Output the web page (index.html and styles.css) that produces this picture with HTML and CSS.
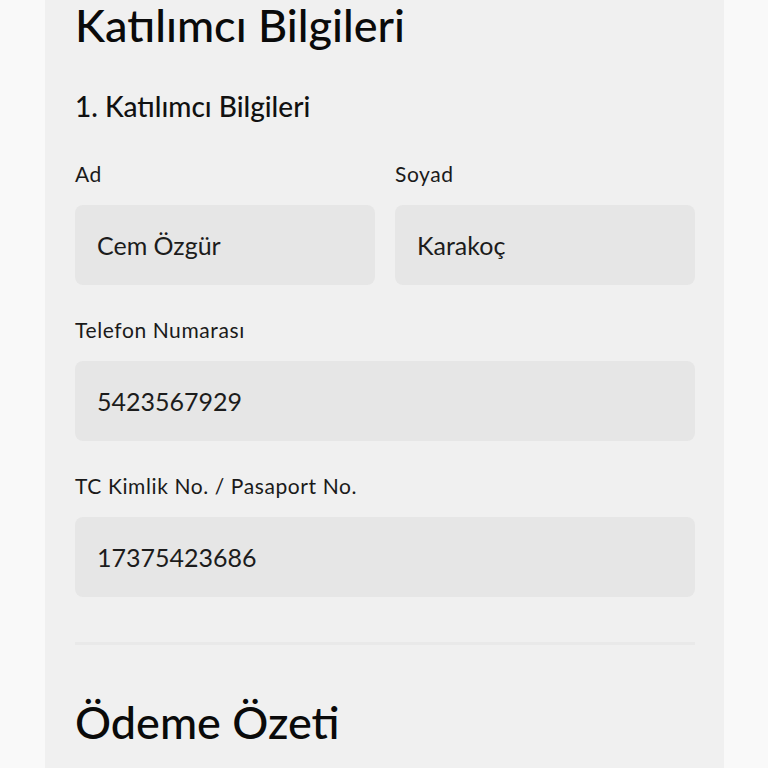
FILE: index.html
```html
<!DOCTYPE html>
<html lang="tr">
<head>
<meta charset="utf-8">
<title>Katılımcı Bilgileri</title>
<link rel="stylesheet" href="styles.css">
</head>
<body>
<main class="panel">
  <h1 class="title">Katılımcı Bilgileri</h1>
  <section class="participant">
    <h2 class="subtitle">1. Katılımcı Bilgileri</h2>
    <div class="row two">
      <label class="field">
        <span class="label">Ad</span>
        <span class="input">Cem Özgür</span>
      </label>
      <label class="field">
        <span class="label">Soyad</span>
        <span class="input">Karakoç</span>
      </label>
    </div>
    <label class="field">
      <span class="label">Telefon Numarası</span>
      <span class="input">5423567929</span>
    </label>
    <label class="field">
      <span class="label">TC Kimlik No. / Pasaport No.</span>
      <span class="input">17375423686</span>
    </label>
  </section>
  <hr class="divider">
  <h1 class="title summary">Ödeme Özeti</h1>
</main>
</body>
</html>
```

FILE: styles.css
```css
html, body {
  margin: 0;
  padding: 0;
  background: #f9f9f9;
  height: 768px;
  overflow: hidden;
}

body {
  font-family: "Lato", "Open Sans", sans-serif;
  color: #111;
}

.panel {
  width: 679px;
  margin-left: 45px;
  background: #f0f0f0;
  box-sizing: border-box;
  padding: 2px 29px 40px 30px;
  min-height: 800px;
}

.title {
  margin: 0;
  font-size: 45px;
  font-weight: 500;
  line-height: 46px;
  color: #0a0a0a;
}

.subtitle {
  margin: 41px 0 0;
  font-size: 28px;
  font-weight: 500;
  line-height: 34px;
  color: #111;
}

.participant {
  display: flex;
  flex-direction: column;
  gap: 33px;
}

.row.two {
  display: grid;
  grid-template-columns: 1fr 1fr;
  gap: 20px;
  margin-top: 6px;
}

.field {
  display: flex;
  flex-direction: column;
  gap: 19px;
}

.label {
  font-size: 21px;
  line-height: 24px;
  letter-spacing: 0.6px;
  color: #1a1a1a;
}

.input {
  display: flex;
  align-items: center;
  height: 80px;
  padding: 0 22px;
  border-radius: 8px;
  background: #e6e6e6;
  font-size: 25px;
  color: #1c1c1c;
}

.divider {
  margin: 45px 0 0;
  border: 0;
  height: 3px;
  background: #e9e9e9;
}

.title.summary {
  margin-top: 53px;
  font-size: 45px;
  line-height: 48px;
}
```
